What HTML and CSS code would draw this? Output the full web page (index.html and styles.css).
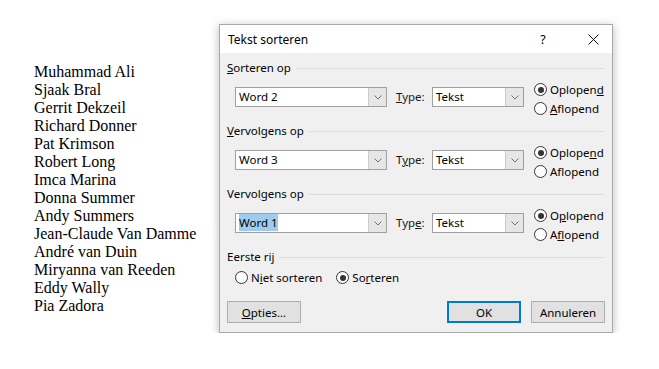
FILE: index.html
```html
<!DOCTYPE html>
<html lang="nl">
<head>
<meta charset="utf-8">
<title>Tekst sorteren</title>
<link rel="stylesheet" href="styles.css">
</head>
<body>
<div class="page">
  <div class="names">
    <div>Muhammad Ali</div>
    <div>Sjaak Bral</div>
    <div>Gerrit Dekzeil</div>
    <div>Richard Donner</div>
    <div>Pat Krimson</div>
    <div>Robert Long</div>
    <div>Imca Marina</div>
    <div>Donna Summer</div>
    <div>Andy Summers</div>
    <div>Jean-Claude Van Damme</div>
    <div>André van Duin</div>
    <div>Miryanna van Reeden</div>
    <div>Eddy Wally</div>
    <div>Pia Zadora</div>
  </div>

  <div class="dialog">
    <div class="titlebar">
      <span class="title">Tekst sorteren</span>
      <span class="help">?</span>
      <span class="close"><svg width="11" height="11" viewBox="0 0 11 11"><path d="M0.5 0.5 L10.5 10.5 M10.5 0.5 L0.5 10.5" stroke="#111" stroke-width="1" fill="none"/></svg></span>
    </div>
    <div class="content">
      <section class="group">
        <div class="group-head"><span><u>S</u>orteren op</span><span class="rule"></span></div>
        <div class="group-row">
          <div class="combo wide"><span class="value">Word 2</span><span class="drop"><svg width="8" height="5" viewBox="0 0 8 5"><path d="M0.5 0.5 L4 4 L7.5 0.5" stroke="#707070" fill="none"/></svg></span></div>
          <span class="lbl"><u>T</u>ype:</span>
          <div class="combo narrow"><span class="value">Tekst</span><span class="drop"><svg width="8" height="5" viewBox="0 0 8 5"><path d="M0.5 0.5 L4 4 L7.5 0.5" stroke="#707070" fill="none"/></svg></span></div>
          <div class="radios">
            <div class="radio"><span class="circle on"></span><span>Oplopen<u>d</u></span></div>
            <div class="radio"><span class="circle"></span><span><u>A</u>flopend</span></div>
          </div>
        </div>
      </section>

      <section class="group">
        <div class="group-head"><span><u>V</u>ervolgens op</span><span class="rule"></span></div>
        <div class="group-row">
          <div class="combo wide"><span class="value">Word 3</span><span class="drop"><svg width="8" height="5" viewBox="0 0 8 5"><path d="M0.5 0.5 L4 4 L7.5 0.5" stroke="#707070" fill="none"/></svg></span></div>
          <span class="lbl">T<u>y</u>pe:</span>
          <div class="combo narrow"><span class="value">Tekst</span><span class="drop"><svg width="8" height="5" viewBox="0 0 8 5"><path d="M0.5 0.5 L4 4 L7.5 0.5" stroke="#707070" fill="none"/></svg></span></div>
          <div class="radios">
            <div class="radio"><span class="circle on"></span><span>Oplope<u>n</u>d</span></div>
            <div class="radio"><span class="circle"></span><span>Af<u>l</u>opend</span></div>
          </div>
        </div>
      </section>

      <section class="group">
        <div class="group-head"><span>Vervol<u>g</u>ens op</span><span class="rule"></span></div>
        <div class="group-row">
          <div class="combo wide"><span class="value"><span class="sel">Word 1</span></span><span class="drop"><svg width="8" height="5" viewBox="0 0 8 5"><path d="M0.5 0.5 L4 4 L7.5 0.5" stroke="#707070" fill="none"/></svg></span></div>
          <span class="lbl">Typ<u>e</u>:</span>
          <div class="combo narrow"><span class="value">Tekst</span><span class="drop"><svg width="8" height="5" viewBox="0 0 8 5"><path d="M0.5 0.5 L4 4 L7.5 0.5" stroke="#707070" fill="none"/></svg></span></div>
          <div class="radios">
            <div class="radio"><span class="circle on"></span><span>O<u>p</u>lopend</span></div>
            <div class="radio"><span class="circle"></span><span>A<u>f</u>lopend</span></div>
          </div>
        </div>
      </section>

      <section class="group last">
        <div class="group-head"><span>Eerste rij</span><span class="rule"></span></div>
        <div class="first-row">
          <div class="radio"><span class="circle"></span><span>N<u>i</u>et sorteren</span></div>
          <div class="radio"><span class="circle on"></span><span>So<u>r</u>teren</span></div>
        </div>
      </section>

      <div class="buttons">
        <button class="btn"><u>O</u>pties...</button>
        <span class="spacer"></span>
        <button class="btn default">OK</button>
        <button class="btn">Annuleren</button>
      </div>
    </div>
  </div>
</div>
</body>
</html>
```
FILE: styles.css
```css
html, body {
  margin: 0;
  padding: 0;
  background: #ffffff;
}

.page {
  display: flex;
  align-items: flex-start;
  padding: 24px 0 0 34px;
}

.names {
  width: 185px;
  margin-top: 39px;
  font-family: "Liberation Serif", "Times New Roman", serif;
  font-size: 16px;
  line-height: 18px;
  color: #000;
}

.dialog {
  width: 392px;
  height: 307px;
  border: 1px solid #a9a9a9;
  background: #f0f0f0;
  box-shadow: 0 2px 9px rgba(0, 0, 0, 0.28);
  font-family: "Noto Sans", "Open Sans", sans-serif;
  font-size: 11.5px;
  color: #000;
  display: flex;
  flex-direction: column;
}

.titlebar {
  height: 28px;
  background: #ffffff;
  display: flex;
  align-items: center;
}

.title {
  flex: 1;
  padding-left: 8px;
  font-size: 12px;
}

.help {
  width: 24px;
  text-align: center;
  font-size: 12.5px;
}

.close {
  width: 38px;
  margin-left: 19px;
  display: flex;
  justify-content: center;
  align-items: center;
}

.content {
  padding: 7px 7px 9px 7px;
  display: flex;
  flex-direction: column;
}

.group {
  margin-bottom: 5px;
}

.group-head {
  height: 16px;
  line-height: 16px;
  display: flex;
  align-items: center;
}

.rule {
  flex: 1;
  height: 1px;
  background: #dcdcdc;
  margin-left: 5px;
  margin-right: 1px;
}

.group-row {
  height: 40px;
  margin-top: 2px;
  padding-left: 8px;
  display: flex;
  align-items: flex-start;
}

.combo {
  margin-top: 9px;
  height: 18px;
  border: 1px solid #a0a0a0;
  background: #ffffff;
  display: flex;
  align-items: stretch;
}

.combo.wide {
  width: 150px;
}

.combo.narrow {
  width: 90px;
}

.value {
  flex: 1;
  padding-left: 3px;
  line-height: 18px;
  white-space: nowrap;
}

.sel {
  background: #9fcbef;
  padding: 1px 0;
}

.drop {
  width: 17px;
  background: #e6e6e6;
  border-left: 1px solid #cccccc;
  display: flex;
  align-items: center;
  justify-content: center;
}

.lbl {
  margin-top: 9px;
  margin-left: 9px;
  width: 36px;
  line-height: 20px;
  color: #1a1a1a;
}

.radios {
  margin-left: 10px;
  margin-top: 2px;
  display: flex;
  flex-direction: column;
}

.radio {
  height: 19px;
  display: flex;
  align-items: center;
  white-space: nowrap;
}

.circle {
  width: 11px;
  height: 11px;
  border: 1px solid #333333;
  border-radius: 50%;
  background: #ffffff;
  margin-right: 3px;
  position: relative;
  flex: none;
}

.circle.on::after {
  content: "";
  position: absolute;
  left: 2.5px;
  top: 2.5px;
  width: 6px;
  height: 6px;
  border-radius: 50%;
  background: #333333;
}

.group.last {
  margin-bottom: 0;
}

.first-row {
  margin-top: 3px;
  padding-left: 8px;
  display: flex;
  gap: 14px;
}

.buttons {
  margin-top: 14px;
  display: flex;
  align-items: center;
}

.spacer {
  flex: 1;
}

.btn {
  width: 74px;
  height: 22px;
  margin: 0;
  padding: 0;
  border: 1px solid #adadad;
  background: #e1e1e1;
  font-family: "Noto Sans", "Open Sans", sans-serif;
  font-size: 11.5px;
  color: #000;
}

.btn.default {
  border: 2px solid #0078d7;
  margin-right: 10px;
}
```
